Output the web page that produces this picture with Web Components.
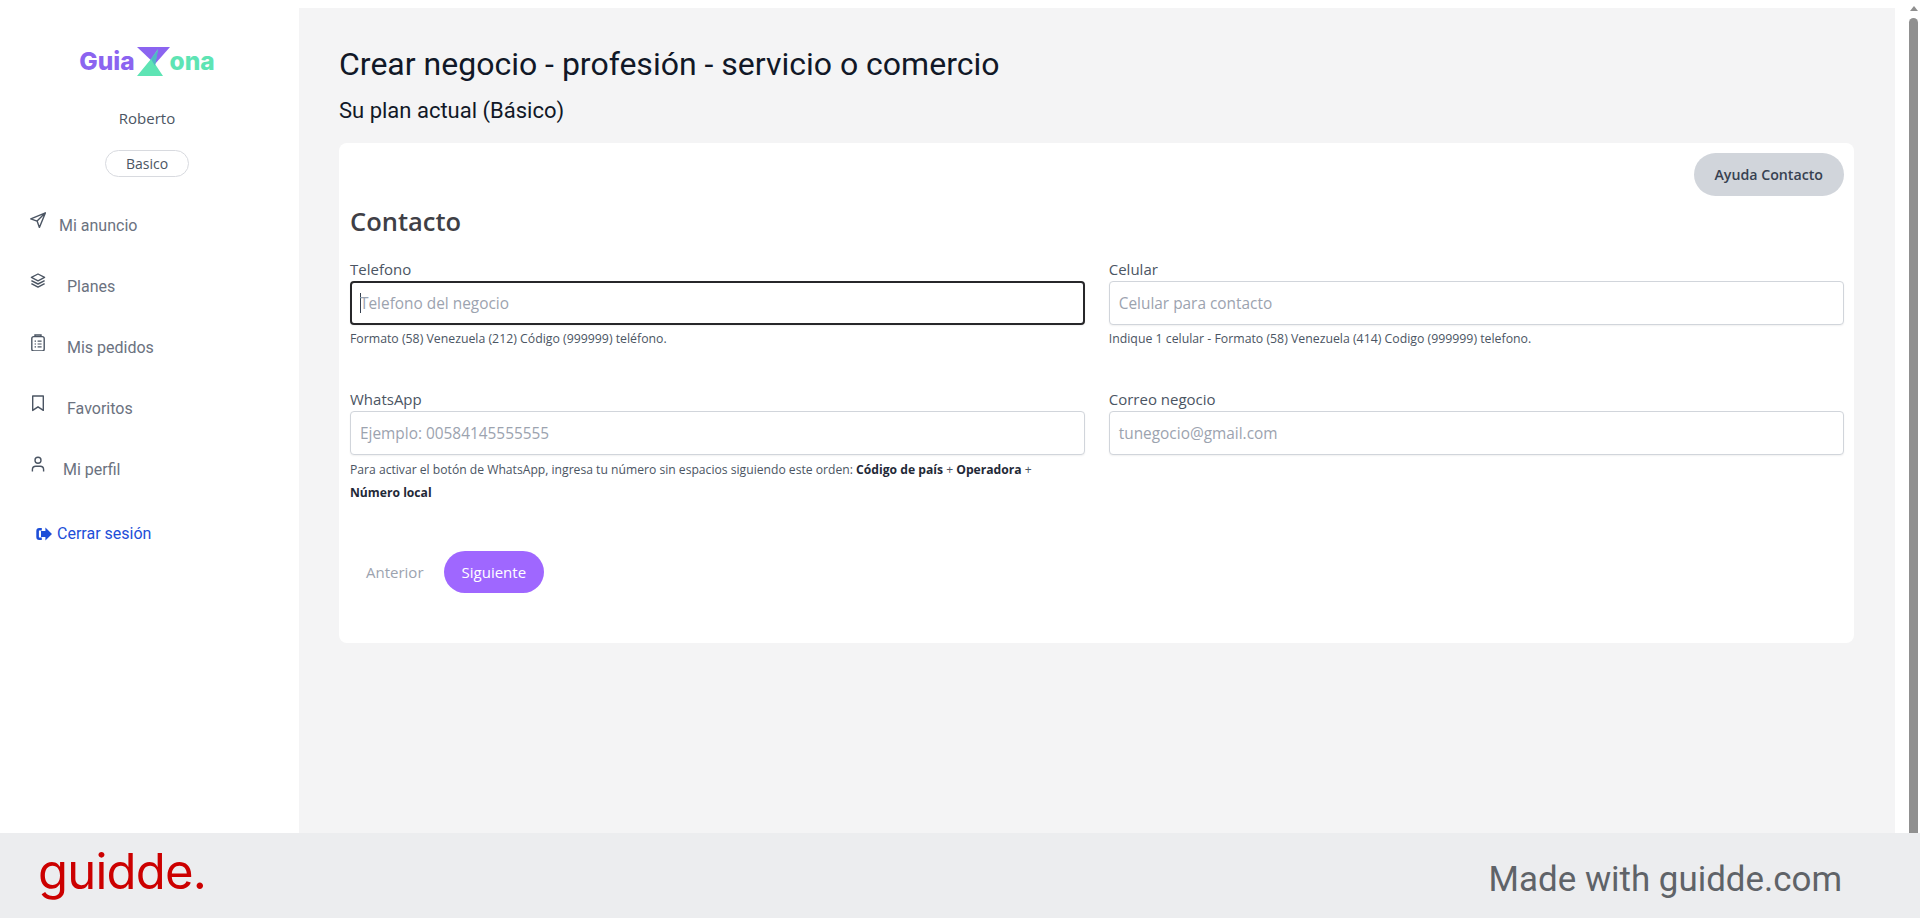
<!DOCTYPE html>
<html lang="es">
<head>
<meta charset="utf-8">
<title>Crear negocio</title>
<style>
  html, body { margin: 0; height: 918px; overflow: hidden; background: #fff; }
</style>
</head>
<body>
<app-shell>
  <side-nav slot="side">
    <brand-logo></brand-logo>
    <nav-item label="Mi anuncio" icon="send" gap="13"></nav-item>
    <nav-item label="Planes" icon="layers" gap="21"></nav-item>
    <nav-item label="Mis pedidos" icon="clipboard" gap="21"></nav-item>
    <nav-item label="Favoritos" icon="bookmark" gap="21"></nav-item>
    <nav-item label="Mi perfil" icon="user" gap="17"></nav-item>
  </side-nav>
  <contact-page></contact-page>
  <fake-scrollbar slot="scroll"></fake-scrollbar>
  <guidde-footer slot="footer"></guidde-footer>
</app-shell>

<script>
const ICONS = {
  send: `<path d="M15.4 .8 .8 6.9l6.3 2.2 2.3 6.3zM15.4 .8 7.1 9.1" fill="none" stroke="currentColor" stroke-width="1.4" stroke-linejoin="round"/>`,
  layers: `<path d="M8 1 1.4 4.4 8 7.8l6.6-3.4z" fill="none" stroke="currentColor" stroke-width="1.3" stroke-linejoin="round"/><path d="M1.4 7.6 8 11l6.6-3.4M1.4 10.7 8 14.1l6.6-3.4" fill="none" stroke="currentColor" stroke-width="1.5" stroke-linejoin="round"/>`,
  clipboard: `<rect x="1.8" y="2.6" width="12.4" height="14.4" rx="2" fill="none" stroke="currentColor" stroke-width="1.4"/><path d="M5 2.6V1h6v1.6" fill="none" stroke="currentColor" stroke-width="1.4"/><path d="M4.6 7.2h1.4M7.6 7.2h4M4.6 10h1.4M7.6 10h4M4.6 12.8h1.4M7.6 12.8h4" stroke="currentColor" stroke-width="1.2"/>`,
  bookmark: `<path d="M2.7 1h10.6v14.4L8 11.8l-5.3 3.6z" fill="none" stroke="currentColor" stroke-width="1.4" stroke-linejoin="round"/>`,
  user: `<circle cx="8" cy="4.2" r="3" fill="none" stroke="currentColor" stroke-width="1.4"/><path d="M2.4 15.4v-1.8c0-2 1.6-3.4 3.4-3.4h4.4c1.8 0 3.4 1.4 3.4 3.4v1.8" fill="none" stroke="currentColor" stroke-width="1.4"/>`
};

class AppShell extends HTMLElement {
  constructor() {
    super();
    this.attachShadow({ mode: "open" }).innerHTML = `
      <style>
        :host { display: grid; grid-template-rows: 833px 85px; height: 918px; }
        .top { display: flex; min-height: 0; }
        main { flex: 1; min-width: 0; margin-top: 8px; background: #f4f4f5; }
      </style>
      <div class="top">
        <slot name="side"></slot>
        <main><slot></slot></main>
        <slot name="scroll"></slot>
      </div>
      <slot name="footer"></slot>
    `;
  }
}

class SideNav extends HTMLElement {
  constructor() {
    super();
    this.attachShadow({ mode: "open" }).innerHTML = `
      <style>
        :host { display: block; width: 299px; flex: none; font-family: Roboto, sans-serif; background: #fff; }
        .who { display: flex; flex-direction: column; align-items: center; padding: 46px 5px 0 0; }
        .name { margin-top: 30px; font: 15px/24px "Open Sans", sans-serif; color: #4b5563; }
        .plan { margin-top: 19.5px; width: 82px; height: 25px; border: 1px solid #d8dadf; border-radius: 14px;
                font: 14px/25px "Open Sans", sans-serif; color: #4b5563; text-align: center; }
        .items { display: flex; flex-direction: column; gap: 37px; padding: 37px 0 0 30px; }
        .out { display: flex; align-items: center; gap: 5px; margin: 40px 0 0 36px; color: #1d4ed8;
               font-size: 16px; line-height: 24px; }
        svg { width: 16px; height: 14px; }
      </style>
      <div class="who">
        <slot name="logo"></slot>
        <div class="name">Roberto</div>
        <div class="plan">Basico</div>
      </div>
      <div class="items"><slot></slot></div>
      <div class="out">
        <svg viewBox="0 0 16 14"><path d="M5.8 1H3.2A2.9 2.9 0 0 0 .3 3.9v6.2A2.9 2.9 0 0 0 3.2 13h2.6v-2.6H3.2a.3.3 0 0 1-.3-.3V3.9c0-.2.1-.3.3-.3h2.6zM9.4 .4v3.6H5v6h4.4v3.6L16 7z" fill="currentColor"/></svg>
        <span>Cerrar sesión</span>
      </div>
    `;
  }
  connectedCallback() {
    const logo = this.querySelector("brand-logo");
    if (logo) logo.slot = "logo";
  }
}

class BrandLogo extends HTMLElement {
  constructor() {
    super();
    this.attachShadow({ mode: "open" }).innerHTML = `
      <style>
        :host { display: flex; align-items: center; height: 30px; font: 800 24.5px/30px Inter, sans-serif; }
        .a { color: #8b64f0; }
        .b { color: #5ee4b4; }
        svg { width: 33px; height: 29px; margin: 0 0 0 2px; }
      </style>
      <span class="a">Guia</span>
      <svg viewBox="0 0 33 29">
        <polygon points="0,0 33,0 18,17" fill="#8b64f0"/>
        <polygon points="0,29 26,29 18,17 21,2 14,12" fill="#5ee4b4"/>
        <polygon points="14,12 21,3 18,19" fill="#4fb7c4"/>
      </svg>
      <span class="b">ona</span>
    `;
  }
}

class NavItem extends HTMLElement {
  constructor() {
    super();
    this.attachShadow({ mode: "open" }).innerHTML = `
      <style>
        :host { display: flex; height: 24px; font-size: 16px; line-height: 24px; color: #6b7280; }
        svg { width: 16px; height: 17px; flex: none; margin-top: -2px; color: #4b5563; }
      </style>
      <svg viewBox="0 0 16 17"></svg><span></span>
    `;
  }
  connectedCallback() {
    const svg = this.shadowRoot.querySelector("svg");
    svg.innerHTML = ICONS[this.getAttribute("icon")] || "";
    svg.style.marginRight = (this.getAttribute("gap") || 13) + "px";
    this.shadowRoot.querySelector("span").textContent = this.getAttribute("label");
  }
}

class FormField extends HTMLElement {
  constructor() {
    super();
    this.attachShadow({ mode: "open" }).innerHTML = `
      <style>
        :host { display: block; font-family: "Open Sans", sans-serif; min-width: 0; }
        label { display: block; height: 23px; font-size: 15px; line-height: 23px; color: #4b5563; }
        .input { box-sizing: border-box; display: flex; align-items: center; height: 44px; padding: 0 9px;
                 background: #fff; border: 1px solid #d1d5db; border-radius: 4px;
                 box-shadow: 0 1px 2px rgba(0, 0, 0, .06); font-size: 15.4px; color: #9ca3af; }
        :host([focused]) .input { border: 2px solid #27272a; padding: 0 8px; }
        .caret { display: none; width: 1px; height: 20px; margin-right: -1px; background: #374151; }
        :host([focused]) .caret { display: block; }
        .help { font-size: 12.3px; line-height: 23px; color: #4b5563; margin-top: 2px; }
        :host([wide]) .help { margin-top: 3px; font-size: 12.15px; }
        ::slotted(b) { color: #1f2937; font-weight: 700; }
      </style>
      <label></label>
      <div class="input"><i class="caret"></i><span class="ph"></span></div>
      <div class="help"><slot></slot></div>
    `;
  }
  connectedCallback() {
    this.shadowRoot.querySelector("label").textContent = this.getAttribute("label");
    this.shadowRoot.querySelector(".ph").textContent = this.getAttribute("placeholder");
  }
}

class ContactPage extends HTMLElement {
  constructor() {
    super();
    this.attachShadow({ mode: "open" }).innerHTML = `
      <style>
        :host { display: block; padding: 31px 41px 0 40px; color: #111827; font-family: Roboto, sans-serif; }
        h1 { margin: 0; font-size: 32px; font-weight: 400; line-height: 50px; }
        .plan { font-size: 22px; line-height: 28px; margin-top: 8px; }
        .card { margin-top: 18px; padding: 10px 10.5px 50px 11px; background: #fff; border-radius: 8px; }
        .help-btn { display: flex; justify-content: flex-end; }
        .help-btn span { height: 43px; padding: 0 20.5px; border-radius: 22px; background: #d1d5db; color: #374151;
                         font: 600 14.2px/43px "Open Sans", sans-serif; }
        h2 { margin: 9px 0 21px; font: 600 25.5px/32px "Open Sans", sans-serif; color: #3f3f46; }
        .grid { display: grid; grid-template-columns: 1fr 1fr; column-gap: 24px; row-gap: 38px; align-items: start; }
        .nav { display: flex; align-items: center; margin-top: 47px; font: 15px "Open Sans", sans-serif; }
        .prev { padding: 0 20px 0 16px; color: #9ca3af; }
        .next { height: 42px; padding: 0 18px; line-height: 42px; border-radius: 21px; background: #9f67ff; color: #fff; }
      </style>
      <h1>Crear negocio - profesión - servicio o comercio</h1>
      <div class="plan">Su plan actual (Básico)</div>
      <section class="card">
        <div class="help-btn"><span>Ayuda Contacto</span></div>
        <h2>Contacto</h2>
        <div class="grid">
          <form-field label="Telefono" placeholder="Telefono del negocio" focused>Formato (58) Venezuela (212) Código (999999) teléfono.</form-field>
          <form-field label="Celular" placeholder="Celular para contacto">Indique 1 celular - Formato (58) Venezuela (414) Codigo (999999) telefono.</form-field>
          <form-field label="WhatsApp" placeholder="Ejemplo: 00584145555555" wide>Para activar el botón de WhatsApp, ingresa tu número sin espacios siguiendo este orden: <b>Código de país</b> + <b>Operadora</b> + <b>Número local</b></form-field>
          <form-field label="Correo negocio" placeholder="tunegocio@gmail.com"></form-field>
        </div>
        <div class="nav"><span class="prev">Anterior</span><span class="next">Siguiente</span></div>
      </section>
    `;
  }
}

class FakeScrollbar extends HTMLElement {
  constructor() {
    super();
    this.attachShadow({ mode: "open" }).innerHTML = `
      <style>
        :host { display: flex; flex: none; width: 25px; box-sizing: border-box; padding-left: 10px;
                flex-direction: column; align-items: center; background: #fff; }
        .up { width: 0; height: 0; margin-top: 6px; border: 4.5px solid transparent; border-top: 0;
              border-bottom: 5px solid #8f8f8f; margin-left: 2px; }
        .thumb { flex: 1; width: 9px; margin: 7px 0 0 2px; background: #909090; border-radius: 4.5px 4.5px 0 0; }
      </style>
      <div class="up"></div>
      <div class="thumb"></div>
    `;
  }
}

class GuiddeFooter extends HTMLElement {
  constructor() {
    super();
    this.attachShadow({ mode: "open" }).innerHTML = `
      <style>
        :host { display: flex; align-items: center; justify-content: space-between; padding: 0 78px 0 38px;
                background: #ecedef; }
        .logo { font: 400 49px/60px Inter, sans-serif; letter-spacing: -.8px; color: #cc0000; margin-top: -8px; }
        .made { font: 400 34.9px/44px Roboto, sans-serif; color: #5f6368; margin-top: 9px; }
      </style>
      <span class="logo">guidde.</span>
      <span class="made">Made with guidde.com</span>
    `;
  }
}

customElements.define("app-shell", AppShell);
customElements.define("side-nav", SideNav);
customElements.define("brand-logo", BrandLogo);
customElements.define("nav-item", NavItem);
customElements.define("form-field", FormField);
customElements.define("contact-page", ContactPage);
customElements.define("fake-scrollbar", FakeScrollbar);
customElements.define("guidde-footer", GuiddeFooter);
</script>
</body>
</html>
